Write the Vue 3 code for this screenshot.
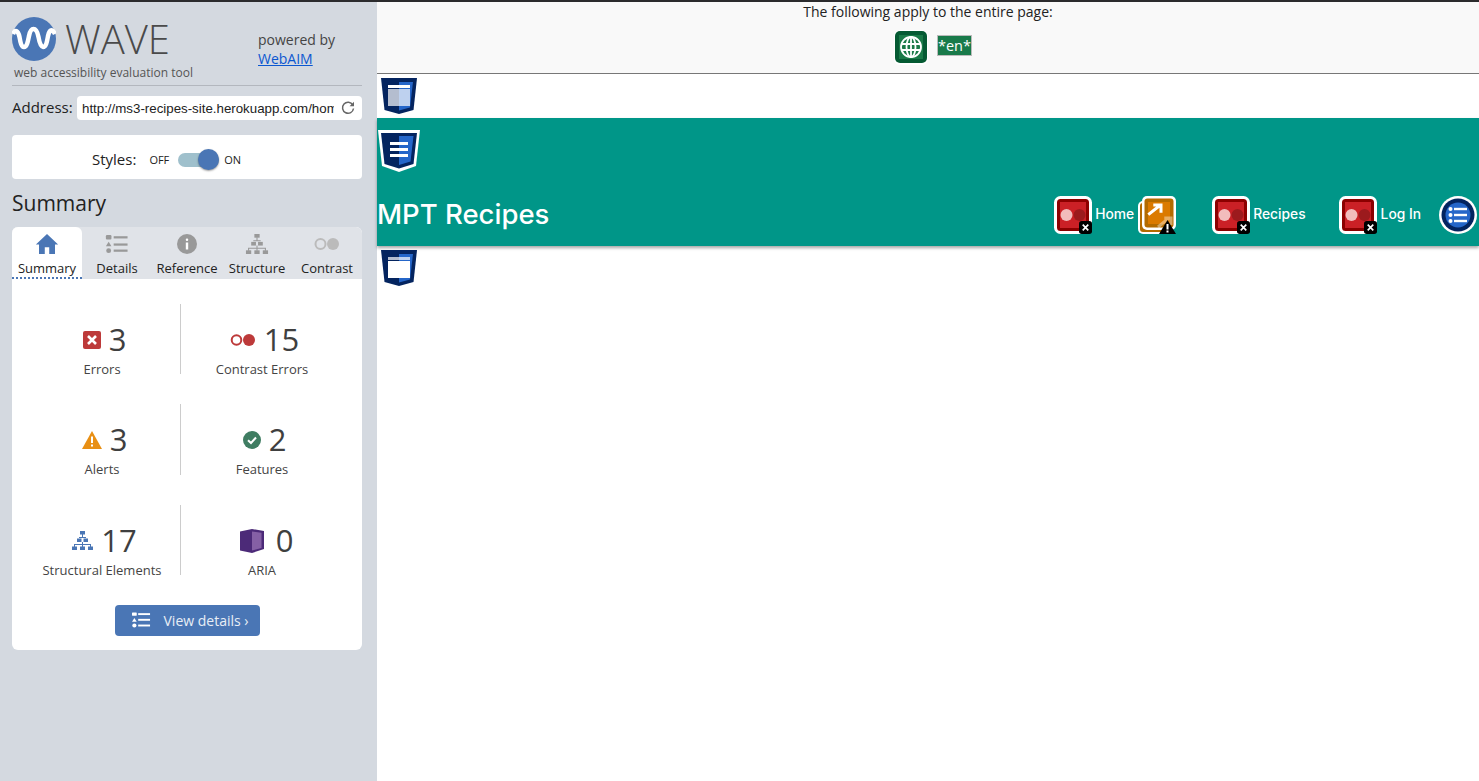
<script setup>
const tabs = [
  { name: 'Summary', icon: 'i-home', active: true },
  { name: 'Details', icon: 'i-list' },
  { name: 'Reference', icon: 'i-info' },
  { name: 'Structure', icon: 'i-tree' },
  { name: 'Contrast', icon: 'i-contrast' }
]

const stats = [
  { label: 'Errors', value: 3, icon: 'i-error', w: 18, h: 18 },
  { label: 'Contrast Errors', value: 15, icon: 'i-contrast-red', w: 26, h: 14 },
  { label: 'Alerts', value: 3, icon: 'i-alert', w: 20, h: 18 },
  { label: 'Features', value: 2, icon: 'i-feature', w: 18, h: 18 },
  { label: 'Structural Elements', value: 17, icon: 'i-tree-blue', w: 21, h: 19 },
  { label: 'ARIA', value: 0, icon: 'i-aria', w: 24, h: 24, wide: true }
]

const navItems = [
  { label: 'Home', extra: true },
  { label: 'Recipes' },
  { label: 'Log In' }
]
</script>

<template>
  <svg class="defs" width="0" height="0">
    <defs>
      <symbol id="i-home" viewBox="0 0 20 18">
        <path d="M10 0 L20 9.5 H17.2 V18 H12 V12 H8 V18 H2.8 V9.5 H0 Z" fill="#4a76b5" />
      </symbol>
      <symbol id="i-list" viewBox="0 0 20 18">
        <g fill="#999">
          <rect x="0" y="1" width="5" height="4" rx="1" />
          <path d="M2.5 7 L5 11 H0 Z" />
          <circle cx="2.5" cy="15" r="2.2" />
          <rect x="7" y="2" width="12.500" height="2" />
          <rect x="7" y="8.500" width="12.500" height="2" />
          <rect x="7" y="14" width="12.500" height="2" />
        </g>
      </symbol>
      <symbol id="i-info" viewBox="0 0 20 20">
        <circle cx="10" cy="10" r="10" fill="#999" />
        <rect x="8.800" y="4.500" width="2.400" height="2.400" rx="1" fill="#fff" />
        <rect x="8.800" y="8.500" width="2.400" height="7" fill="#fff" />
      </symbol>
      <symbol id="i-tree" viewBox="0 0 21 19">
        <g fill="#999">
          <rect x="8" y="0" width="5" height="3.500" />
          <rect x="5" y="7.500" width="4.500" height="3.500" />
          <rect x="11.500" y="7.500" width="4.500" height="3.500" />
          <rect x="0" y="15.500" width="5" height="3.500" />
          <rect x="8" y="15.500" width="5" height="3.500" />
          <rect x="16" y="15.500" width="5" height="3.500" />
          <path d="M10 3 h1 v3.500 h-1z M7 6 h7 v1 h-7z M10 11 h1 v2.500 h-1z M2 13 h17 v1 h-17z M2 13 h1 v3 h-1z M18 13 h1 v3 h-1z M10 13 h1 v3 h-1z" />
        </g>
      </symbol>
      <symbol id="i-tree-blue" viewBox="0 0 21 19">
        <g fill="#4a76b5">
          <rect x="8" y="0" width="5" height="3.500" />
          <rect x="5" y="7.500" width="4.500" height="3.500" />
          <rect x="11.500" y="7.500" width="4.500" height="3.500" />
          <rect x="0" y="15.500" width="5" height="3.500" />
          <rect x="8" y="15.500" width="5" height="3.500" />
          <rect x="16" y="15.500" width="5" height="3.500" />
          <path d="M10 3 h1 v3.500 h-1z M7 6 h7 v1 h-7z M10 11 h1 v2.500 h-1z M2 13 h17 v1 h-17z M2 13 h1 v3 h-1z M18 13 h1 v3 h-1z M10 13 h1 v3 h-1z" />
        </g>
      </symbol>
      <symbol id="i-contrast" viewBox="0 0 26 14">
        <circle cx="6.500" cy="7" r="5" fill="none" stroke="#bbb" stroke-width="2" />
        <circle cx="19" cy="7" r="6" fill="#bbb" />
      </symbol>
      <symbol id="i-contrast-red" viewBox="0 0 26 14">
        <circle cx="6.500" cy="7" r="4.800" fill="none" stroke="#bd3a3a" stroke-width="2" />
        <circle cx="19" cy="7" r="6" fill="#bd3a3a" />
      </symbol>
      <symbol id="i-error" viewBox="0 0 18 18">
        <rect width="18" height="18" rx="2" fill="#bd3a3a" />
        <path d="M5 5 L13 13 M13 5 L5 13" stroke="#fff" stroke-width="2.600" />
      </symbol>
      <symbol id="i-alert" viewBox="0 0 20 18">
        <path d="M10 0 L20 18 H0 Z" fill="#e88f14" />
        <rect x="9" y="5.500" width="2" height="6.500" fill="#fff" />
        <rect x="9" y="13.500" width="2" height="2" fill="#fff" />
      </symbol>
      <symbol id="i-feature" viewBox="0 0 18 18">
        <circle cx="9" cy="9" r="9" fill="#3f7d62" />
        <path d="M5 9.200 L8 12 L13 6.500" fill="none" stroke="#fff" stroke-width="2" />
      </symbol>
      <symbol id="i-aria" viewBox="0 0 24 24">
        <path d="M0 2.500 L12 0 L24 2 V20 L12 24 L0 21.500 Z" fill="#4c2a78" />
        <path d="M12 2.500 L21.500 3.800 V19 L12 21.500 Z" fill="#8560a5" />
      </symbol>
      <symbol id="i-view" viewBox="0 0 20 16">
        <g fill="#fff">
          <rect x="0" y="0" width="5" height="3.500" rx="0.500" />
          <path d="M2.500 5.800 L5 9.800 H0 Z" />
          <circle cx="2.500" cy="13.800" r="2.200" />
          <rect x="6.500" y="0.800" width="12.500" height="2" />
          <rect x="6.500" y="6.800" width="12.500" height="2" />
          <rect x="6.500" y="12.800" width="12.500" height="2" />
        </g>
      </symbol>
      <symbol id="i-shield" viewBox="0 0 36 36">
        <path d="M0 0 H36 L32.500 32 L18 36 L3.500 32 Z" fill="#04245f" />
        <path d="M18 4 H32 L29 29.500 L18 32.500 Z" fill="#2566c9" />
      </symbol>
      <symbol id="i-empty-red" viewBox="0 0 38 38">
        <rect x="1.500" y="1.500" width="35" height="35" rx="5" fill="#8c0000" stroke="#fff" stroke-width="3" />
        <rect x="6" y="6" width="26" height="26" fill="#cb2026" />
        <circle cx="12.500" cy="19" r="6" fill="#f2bcbc" />
        <circle cx="25.500" cy="19" r="6" fill="#9c1a1d" />
      </symbol>
      <symbol id="i-badge-x" viewBox="0 0 14 14">
        <rect width="14" height="14" rx="3" fill="#000" />
        <path d="M4 4 L10 10 M10 4 L4 10" stroke="#fff" stroke-width="1.800" />
      </symbol>
    </defs>
  </svg>

  <div class="page">
    <div class="topline"></div>
    <div class="shell">
      <aside class="sidebar">
        <div class="brand">
          <div class="brand-left">
            <div class="logo-row">
              <svg class="logo-mark" width="44" height="44" viewBox="0 0 44 44">
                <circle cx="22" cy="22" r="22" fill="#4a76b5" />
                <path d="M1 17 C3 12.500 6 13 7.500 20 C8.500 26 9.500 30 12 30 C15 30 16 24 17 19 C18 14 19 12 21.500 12 C24 12 25.500 15 26.500 20 C27.500 26 29 30 31 30 C34 30 35 25 36 19 C37 14 38.500 13 40 13.500 C41 14 42 15 43 17" fill="none" stroke="#fff" stroke-width="4.500" />
              </svg>
              <span class="logo-word">WAVE</span>
            </div>
            <div class="tagline">web accessibility evaluation tool</div>
          </div>
          <div class="powered">
            <div>powered by</div>
            <a class="webaim" href="#">WebAIM</a>
          </div>
        </div>

        <div class="address">
          <label class="address-label">Address:</label>
          <div class="address-box">
            <span class="address-text">http://ms3-recipes-site.herokuapp.com/home</span>
            <svg width="14" height="14" viewBox="0 0 14 14" class="reload">
              <path d="M11.800 4 A5.500 5.500 0 1 0 12.500 7.500" fill="none" stroke="#666" stroke-width="1.500" />
              <path d="M13 0.800 V5.200 H8.600 Z" fill="#666" />
            </svg>
          </div>
        </div>

        <div class="styles-card">
          <span class="styles-label">Styles:</span>
          <span class="toggle-text off">OFF</span>
          <span class="toggle"><span class="knob"></span></span>
          <span class="toggle-text">ON</span>
        </div>

        <h2 class="summary-title">Summary</h2>

        <div class="card">
          <div class="tabs">
            <div v-for="tab in tabs" :key="tab.name" class="tab" :class="{ active: tab.active }">
              <svg class="tab-icon" width="26" height="20"><use :href="'#' + tab.icon" /></svg>
              <span>{{ tab.name }}</span>
            </div>
          </div>

          <div class="stats">
            <div v-for="(stat, i) in stats" :key="stat.label" class="stat" :class="{ left: i % 2 === 0 }">
              <div class="stat-top" :class="{ wide: stat.wide }">
                <svg :width="stat.w" :height="stat.h"><use :href="'#' + stat.icon" /></svg>
                <span class="stat-value">{{ stat.value }}</span>
              </div>
              <div class="stat-label">{{ stat.label }}</div>
            </div>
          </div>

          <div class="details-row">
            <a class="details-btn" href="#">
              <svg width="19" height="16"><use href="#i-view" /></svg>
              <span>View details ›</span>
            </a>
          </div>
        </div>
      </aside>

      <main class="content">
        <div class="page-info">
          <div class="page-info-text">The following apply to the entire page:</div>
          <div class="page-info-icons">
            <span class="globe-icon">
              <svg width="34" height="35" viewBox="0 0 34 35">
                <rect x="0" y="0" width="34" height="35" rx="6" fill="#fff" />
                <rect x="1" y="1" width="32" height="32" rx="5" fill="#055a33" />
                <rect x="5" y="5" width="24" height="24" fill="#1a7a48" />
                <g fill="none" stroke="#fff" stroke-width="1.800">
                  <circle cx="17" cy="17" r="10" />
                  <ellipse cx="17" cy="17" rx="4.500" ry="10" />
                  <path d="M17 7 V27 M7.500 14 H26.500 M7.500 20 H26.500" />
                </g>
              </svg>
            </span>
            <span class="lang-tag">*en*</span>
          </div>
        </div>

        <div class="landmark-row">
          <span class="shield">
            <svg width="36" height="36"><use href="#i-shield" /></svg>
            <svg class="shield-glyph" width="24" height="24" viewBox="0 0 24 24">
              <rect x="1" y="2" width="22" height="3" fill="#fff" />
              <rect x="1" y="6" width="11" height="17" fill="#fff" opacity="0.700" />
              <rect x="12" y="6" width="11" height="17" fill="#fff" opacity="0.700" />
            </svg>
          </span>
        </div>

        <header class="hero">
          <span class="nav-shield">
            <svg width="42" height="42" viewBox="0 0 42 42">
              <path d="M0 0 H42 L38 36 L21 42 L4 36 Z" fill="#fff" />
              <path d="M3 3 H39 L35.500 34 L21 38.500 L6.500 34 Z" fill="#04245f" />
              <path d="M21 6 H35.500 L32.500 31.500 L21 35 Z" fill="#2566c9" />
              <rect x="12" y="12" width="18" height="3" fill="#fff" />
              <rect x="12" y="18" width="18" height="3" fill="#fff" />
              <rect x="12" y="24" width="18" height="3" fill="#fff" />
            </svg>
          </span>
          <div class="hero-bar">
            <span class="site-title">MPT Recipes</span>
            <nav class="nav">
              <div v-for="item in navItems" :key="item.label" class="nav-item">
                <span class="nav-icon">
                  <svg width="38" height="38"><use href="#i-empty-red" /></svg>
                  <svg class="badge-x" width="13" height="13"><use href="#i-badge-x" /></svg>
                </span>
                <span class="nav-label">{{ item.label }}</span>
                <span v-if="item.extra" class="nav-icon extra">
                  <svg width="38" height="38" viewBox="0 0 38 38">
                    <rect x="0" y="5" width="33" height="33" rx="5" fill="#fff" />
                    <rect x="2" y="7" width="29" height="29" rx="3" fill="#b36b00" />
                    <rect x="4" y="0" width="34" height="34" rx="5" fill="#fff" />
                    <rect x="6.500" y="2.500" width="29" height="29" rx="3" fill="#b36b00" />
                    <rect x="10" y="6" width="22" height="22" fill="#db7a00" />
                    <path d="M20 31 L31 22 M26.300 22 H33 V29" fill="none" stroke="#fff" stroke-width="3" opacity="0.400" />
                    <path d="M10.300 18.700 L22.500 9 M15.300 9 H23 V16.700" fill="none" stroke="#fff" stroke-width="3" />
                    <path d="M29.500 24 L38 38 H21 Z" fill="#000" />
                    <rect x="28.500" y="28" width="2" height="5.500" fill="#fff" />
                    <rect x="28.500" y="34.500" width="2" height="2" fill="#fff" />
                  </svg>
                </span>
              </div>
              <span class="list-icon">
                <svg width="38" height="38" viewBox="0 0 38 38">
                  <circle cx="19" cy="19" r="19" fill="#fff" />
                  <circle cx="19" cy="19" r="16.500" fill="#04245f" />
                  <circle cx="19" cy="19" r="12.500" fill="#2566c9" />
                  <g fill="#fff">
                    <circle cx="11.500" cy="13" r="2" />
                    <circle cx="11.500" cy="19" r="2" />
                    <circle cx="11.500" cy="25" r="2" />
                    <rect x="15" y="11.800" width="13" height="2.400" />
                    <rect x="15" y="17.800" width="13" height="2.400" />
                    <rect x="15" y="23.800" width="13" height="2.400" />
                  </g>
                </svg>
              </span>
            </nav>
          </div>
        </header>

        <div class="landmark-row low">
          <span class="shield">
            <svg width="36" height="36"><use href="#i-shield" /></svg>
            <svg class="shield-glyph" width="24" height="24" viewBox="0 0 24 24">
              <rect x="1" y="2" width="22" height="3" fill="#fff" opacity="0.700" />
              <rect x="1" y="6" width="22" height="17" fill="#fff" />
            </svg>
          </span>
        </div>
      </main>
    </div>
  </div>
</template>

<style>
html, body {
  margin: 0;
  overflow: hidden;
}
</style>

<style scoped>
.defs {
  position: absolute;
}

.page {
  height: 781px;
  display: flex;
  flex-direction: column;
  font-family: "Open Sans", sans-serif;
  color: #222;
}

.topline {
  height: 2px;
  background: #2b2b2d;
  flex: none;
}

.shell {
  flex: 1;
  display: flex;
  min-height: 0;
}

.sidebar {
  width: 350px;
  flex: none;
  padding: 0 15px 0 12px;
  background: #d4d9e0;
}

.brand {
  height: 83px;
  border-bottom: 1px solid #b3b7be;
  display: flex;
}

.brand-left {
  width: 246px;
  padding-top: 15px;
}

.logo-row {
  display: flex;
  align-items: center;
  gap: 9px;
  height: 44px;
}

.logo-word {
  font-size: 40px;
  font-weight: 300;
  color: #4a4a4a;
  line-height: 44px;
}

.tagline {
  margin: 3px 0 0 2px;
  font-size: 12px;
  line-height: 17px;
  color: #555;
}

.powered {
  padding-top: 28px;
  font-size: 14px;
  line-height: 19px;
  color: #444;
}

.webaim {
  color: #0b57d0;
}

.address {
  display: flex;
  align-items: center;
  justify-content: space-between;
  margin-top: 10px;
}

.address-label {
  font-size: 15px;
  margin-bottom: 2px;
}

.address-box {
  width: 285px;
  height: 24px;
  box-sizing: border-box;
  background: #fff;
  border-radius: 4px;
  padding: 0 7px 0 5px;
  display: flex;
  align-items: center;
  justify-content: space-between;
}

.address-text {
  width: 252px;
  overflow: hidden;
  white-space: nowrap;
  font-family: "Liberation Sans", sans-serif;
  font-size: 13.300px;
}

.reload {
  flex: none;
}

.styles-card {
  margin-top: 15px;
  height: 44px;
  box-sizing: border-box;
  padding: 5px 0 0 80px;
  background: #fff;
  border-radius: 4px;
  display: flex;
  align-items: center;
  font-size: 15px;
}

.styles-label {
  margin-right: 13px;
  margin-bottom: 2px;
}

.toggle-text {
  font-size: 11px;
}

.toggle-text.off {
  margin-right: 9px;
}

.toggle {
  width: 41px;
  height: 14px;
  margin-right: 5px;
  border-radius: 7px;
  background: #9fc0cc;
  position: relative;
}

.knob {
  position: absolute;
  right: 0;
  top: -3.500px;
  width: 21px;
  height: 21px;
  border-radius: 50%;
  background: #4a76b5;
  box-shadow: 0 1px 2px rgba(0, 0, 0, 0.4);
}

.summary-title {
  margin: 10px 0 9px;
  font-size: 21px;
  font-weight: 400;
  line-height: 29px;
  color: #222;
}

.card {
  background: #fff;
  border-radius: 6px;
  height: 423px;
}

.tabs {
  display: flex;
  height: 52px;
  background: #e0e3e8;
  border-radius: 6px 6px 0 0;
}

.tab {
  width: 70px;
  display: flex;
  flex-direction: column;
  align-items: center;
  padding-top: 7px;
  box-sizing: border-box;
  font-size: 13px;
  line-height: 17px;
}

.tab.active {
  background: #fff;
  border-radius: 6px 6px 0 0;
  border-bottom: 2px dotted #4a76b5;
}

.tab-icon {
  margin-bottom: 6px;
}

.stats {
  display: grid;
  grid-template-columns: 180px 140px;
  grid-template-rows: 70px 71px 70px;
  row-gap: 30px;
  padding-top: 25px;
}

.stat {
  display: flex;
  flex-direction: column;
  align-items: center;
  position: relative;
}

/* divider sits left of the column edge, the cells are not centred on it */
.stat.left::after {
  content: "";
  position: absolute;
  top: 0;
  bottom: 0;
  right: 11px;
  width: 1px;
  background: #ccc;
}

.stat-top {
  display: flex;
  align-items: center;
  gap: 8px;
  height: 43px;
  margin-top: 14px;
  padding-left: 5px;
}

.stat-top.wide {
  gap: 12px;
  padding-left: 9px;
}

.stat-value {
  font-size: 31px;
  line-height: 43px;
  color: #3f3f3f;
}

.stat-label {
  font-size: 13px;
  line-height: 17px;
  color: #444;
}

.details-row {
  display: flex;
  justify-content: center;
  margin-top: 30px;
}

.details-btn {
  width: 145px;
  height: 31px;
  box-sizing: border-box;
  padding: 0 0 1px 17px;
  display: flex;
  align-items: center;
  gap: 13px;
  background: #4a76b5;
  border-radius: 4px;
  color: #e8eef6;
  font-size: 14px;
  text-decoration: none;
}

.content {
  flex: 1;
  min-width: 0;
  background: #fff;
}

.page-info {
  height: 71px;
  background: #f9f9f9;
  border-bottom: 1px solid #777;
  display: flex;
  flex-direction: column;
  align-items: center;
}

.page-info-text {
  margin-top: 1px;
  font-size: 14px;
  line-height: 17px;
  color: #222;
}

.page-info-icons {
  display: flex;
  align-items: flex-start;
  gap: 9px;
  margin: 10px 0 0 10px;
}

.globe-icon {
  height: 35px;
}

.lang-tag {
  margin-top: 5px;
  background: #197a4a;
  border: 1px solid #bbb;
  color: #fff;
  font-size: 14.500px;
  line-height: 19px;
}

.landmark-row {
  height: 44px;
  padding: 4px 0 0 4px;
  box-sizing: border-box;
}

.shield {
  position: relative;
  display: inline-block;
  width: 36px;
  height: 36px;
}

.shield-glyph {
  position: absolute;
  left: 6px;
  top: 5px;
}

.hero {
  height: 128px;
  background: #009688;
  box-shadow: 0 2px 3px rgba(0, 0, 0, 0.35);
  position: relative;
}

.nav-shield {
  display: block;
  height: 42px;
  padding: 12px 0 0 1px;
}

.hero-bar {
  display: flex;
  align-items: center;
  justify-content: space-between;
  margin-top: 18px;
  padding-right: 2px;
  height: 50px;
}

.site-title {
  color: #fff;
  font-family: Inter, sans-serif;
  font-size: 27.500px;
  font-weight: 500;
  margin-bottom: 2px;
}

.nav {
  display: flex;
  align-items: center;
}

.nav-item {
  display: flex;
  align-items: center;
  margin-right: 33px;
}

.nav-item:first-child {
  margin-right: 36px;
}

.nav-item:nth-child(3) {
  margin-right: 18px;
}

.nav-item:nth-child(3) .nav-label {
  margin-left: 4px;
}

.nav-icon {
  position: relative;
  display: block;
  width: 38px;
  height: 38px;
}

.nav-icon.extra {
  margin-left: 4px;
}

.badge-x {
  position: absolute;
  right: 0;
  bottom: 0;
}

.nav-label {
  margin: 0 0 3px 3px;
  color: #fff;
  font-family: Inter, sans-serif;
  font-size: 13.800px;
  font-weight: 500;
}

.list-icon {
  display: block;
  height: 38px;
}
</style>
